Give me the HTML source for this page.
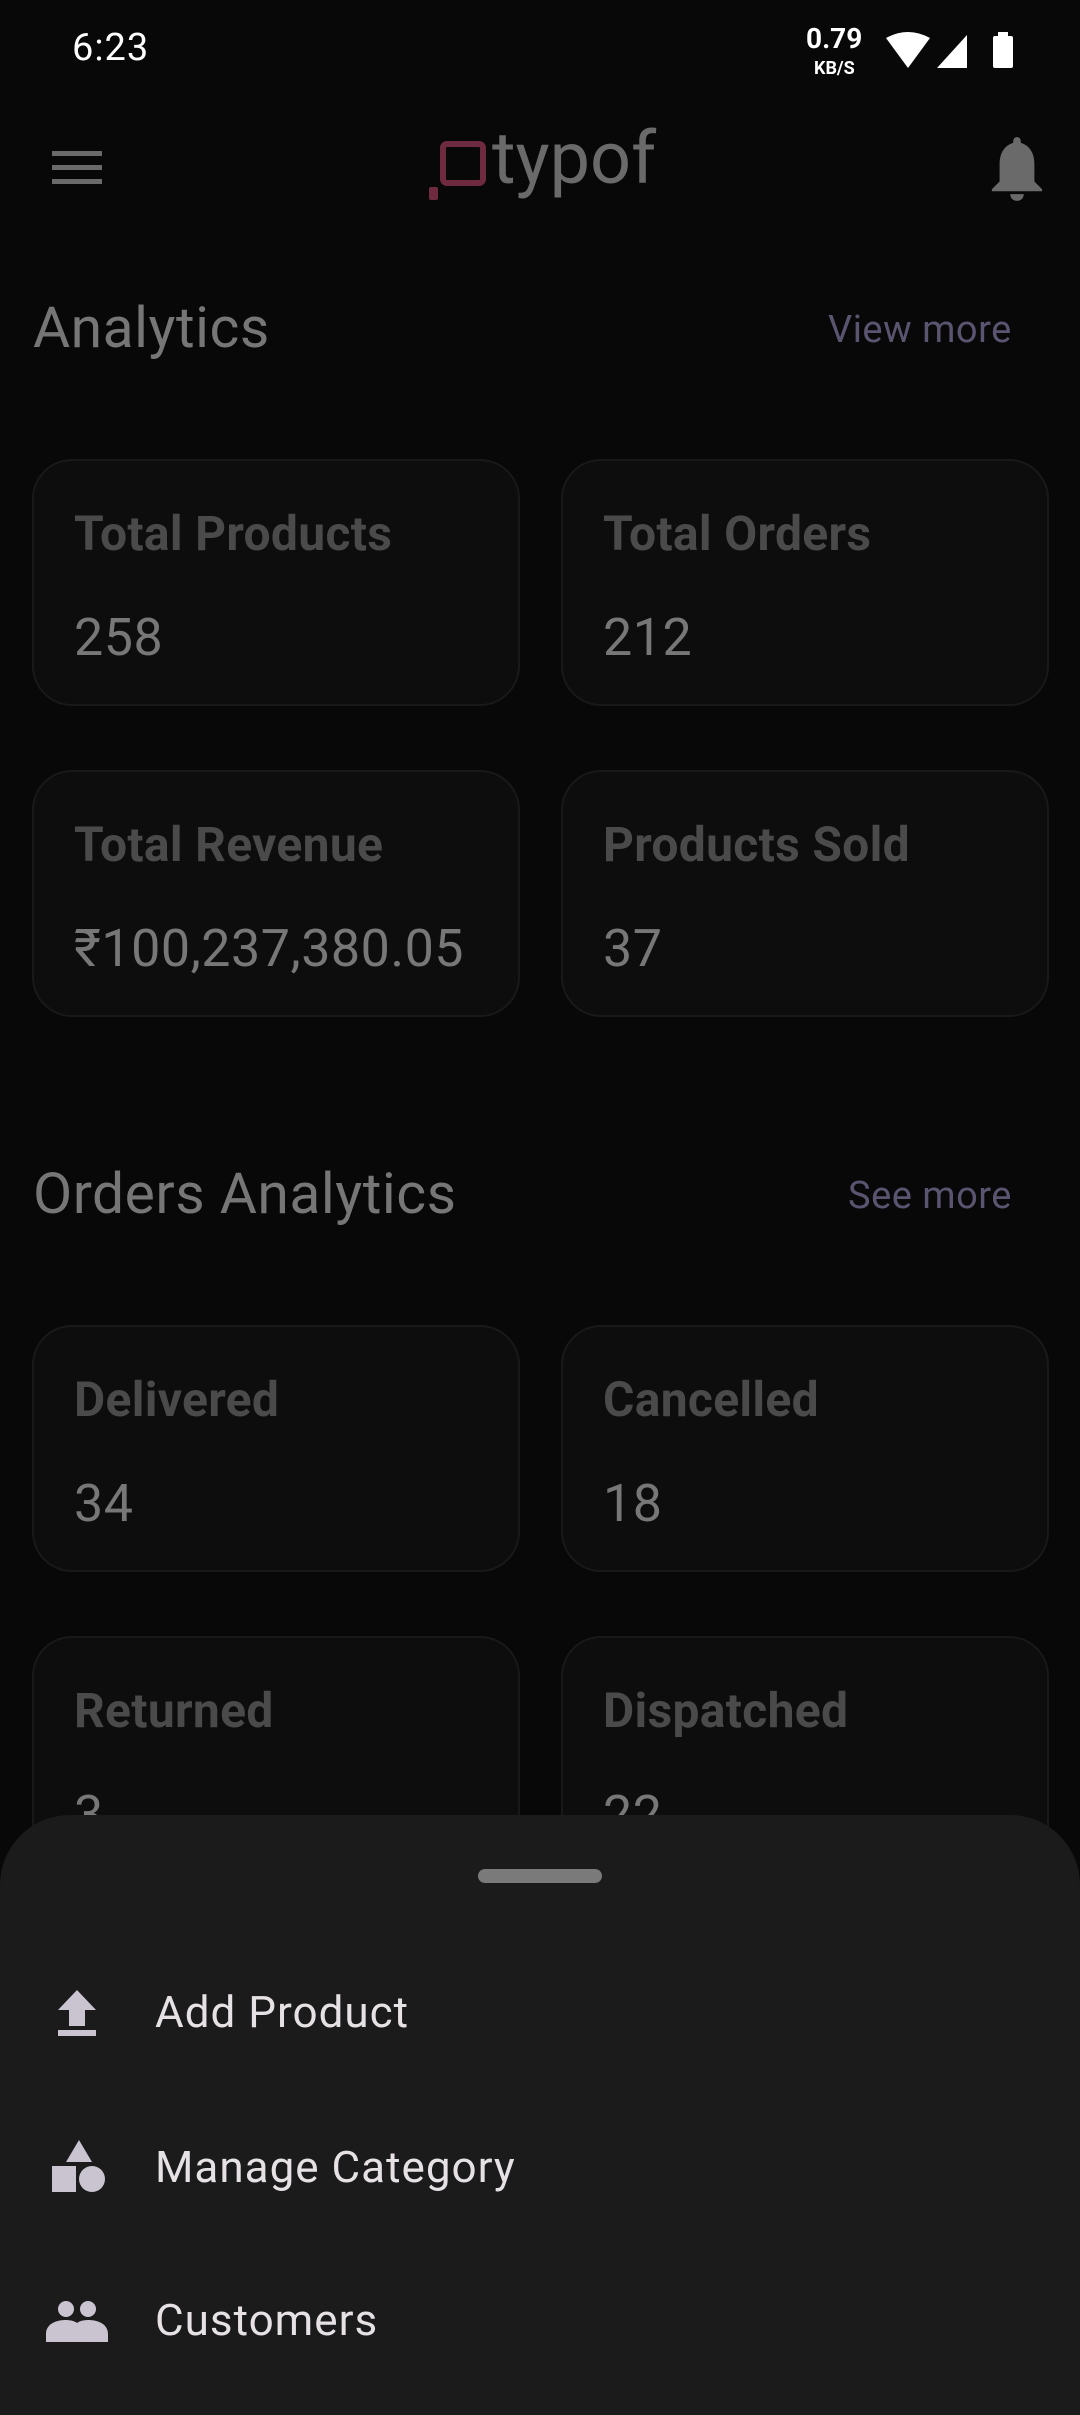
<!DOCTYPE html>
<html><head><meta charset="utf-8"><style>
*{margin:0;padding:0;box-sizing:border-box}
body{width:1080px;height:2400px;background:#080808;position:relative;overflow:hidden;font-family:"Roboto","Liberation Sans",sans-serif}
.a{position:absolute;white-space:nowrap}
.card{position:absolute;width:488px;height:247px;background:#0d0d0d;border:2px solid #191919;border-radius:40px}
.card .t{position:absolute;left:40px;top:44px;font-size:48px;font-weight:bold;color:#4a4a4a;letter-spacing:0.3px}
.card .v{position:absolute;left:40px;top:146px;font-size:52px;color:#777;letter-spacing:0.5px}
.h{font-size:57px;color:#767676;letter-spacing:0.5px}
.m{font-size:38px;color:#5b5470;letter-spacing:0.5px}
.sheet{position:absolute;left:0;top:1815px;width:1080px;height:600px;background:#1b1b1b;border-radius:70px 70px 0 0}
.it{position:absolute;left:155px;font-size:44px;color:#e6e1e5;letter-spacing:1px}
</style></head><body>
<div class="a" style="left:72px;top:26px;font-size:38px;color:#fff;letter-spacing:1px">6:23</div>
<div class="a" style="left:806px;top:22px;font-size:28px;font-weight:bold;color:#fff">0.79</div>
<div class="a" style="left:814px;top:58px;font-size:18px;font-weight:bold;color:#fff">KB/S</div>
<svg class="a" style="left:884px;top:30px" width="130" height="40" viewBox="0 0 130 40">
<path d="M2 8 Q24 -4 46 8 L24 38 Z" fill="#fff"/>
<path d="M53 38 L83 5 L83 38 Z" fill="#fff"/>
<rect x="109" y="6" width="20" height="32" rx="2" fill="#fff"/><rect x="114" y="2" width="10" height="6" fill="#fff"/>
</svg>
<svg class="a" style="left:52px;top:151px" width="50" height="34"><rect y="0" width="50" height="5" fill="#6a6a6a"/><rect y="14" width="50" height="5" fill="#6a6a6a"/><rect y="28" width="50" height="5" fill="#6a6a6a"/></svg>
<svg class="a" style="left:426px;top:138px" width="70" height="62"><rect x="17" y="6" width="40" height="39" rx="4" fill="none" stroke="#6e2b3f" stroke-width="6"/><rect x="3" y="49" width="9" height="13" rx="2" fill="#6e2b3f"/></svg>
<div class="a" style="left:492px;top:116px;font-size:72px;color:#6a6a6a">typof</div>
<svg class="a" style="left:988px;top:134px" width="58" height="68" viewBox="0 0 60 68"><path d="M30 2 C33 2 34 4 34 8 C44 11 48 20 48 30 L48 48 L56 56 L56 58 L4 58 L4 56 L12 48 L12 30 C12 20 16 11 26 8 C26 4 27 2 30 2 Z" fill="#6a6a6a"/><path d="M23 61 L37 61 C37 66 33 68 30 68 C27 68 23 66 23 61 Z" fill="#6a6a6a"/></svg>
<div class="a h" style="left:33px;top:294px">Analytics</div>
<div class="a m" style="left:828px;top:308px">View more</div>
<div class="card" style="left:32px;top:459px"><div class="t a">Total Products</div><div class="v a">258</div></div>
<div class="card" style="left:561px;top:459px"><div class="t a">Total Orders</div><div class="v a">212</div></div>
<div class="card" style="left:32px;top:770px"><div class="t a">Total Revenue</div><div class="v a">₹100,237,380.05</div></div>
<div class="card" style="left:561px;top:770px"><div class="t a">Products Sold</div><div class="v a">37</div></div>
<div class="a h" style="left:33px;top:1160px">Orders Analytics</div>
<div class="a m" style="left:848px;top:1174px">See more</div>
<div class="card" style="left:32px;top:1325px"><div class="t a">Delivered</div><div class="v a">34</div></div>
<div class="card" style="left:561px;top:1325px"><div class="t a">Cancelled</div><div class="v a">18</div></div>
<div class="card" style="left:32px;top:1636px"><div class="t a">Returned</div><div class="v a">3</div></div>
<div class="card" style="left:561px;top:1636px"><div class="t a">Dispatched</div><div class="v a">22</div></div>
<div class="sheet">
<div class="a" style="left:478px;top:54px;width:124px;height:14px;border-radius:7px;background:#7a7a7a"></div>
</div>
<svg class="a" style="left:56px;top:1990px" width="42" height="48" viewBox="0 0 42 48"><path d="M21 0 L40 20 L29 20 L29 36 L13 36 L13 20 L2 20 Z" fill="#cac4d0"/><rect x="2" y="40" width="38" height="6" fill="#cac4d0"/></svg>
<div class="it" style="top:1986px">Add Product</div>
<svg class="a" style="left:52px;top:2140px" width="54" height="54" viewBox="0 0 54 54"><path d="M27 0 L40 22 L14 22 Z" fill="#cac4d0"/><rect x="0" y="26" width="24" height="26" fill="#cac4d0"/><ellipse cx="40" cy="39" rx="13" ry="13" fill="#cac4d0"/></svg>
<div class="it" style="top:2141px">Manage Category</div>
<svg class="a" style="left:46px;top:2300px" width="62" height="42" viewBox="0 0 62 42"><circle cx="20" cy="9" r="8" fill="#cac4d0"/><circle cx="42" cy="9" r="8" fill="#cac4d0"/><path d="M0 42 L0 34 C0 24 10 20 20 20 C26 20 30 22 31 23 C32 22 36 20 42 20 C52 20 62 24 62 34 L62 42 Z" fill="#cac4d0"/></svg>
<div class="it" style="top:2294px">Customers</div>
</body></html>
